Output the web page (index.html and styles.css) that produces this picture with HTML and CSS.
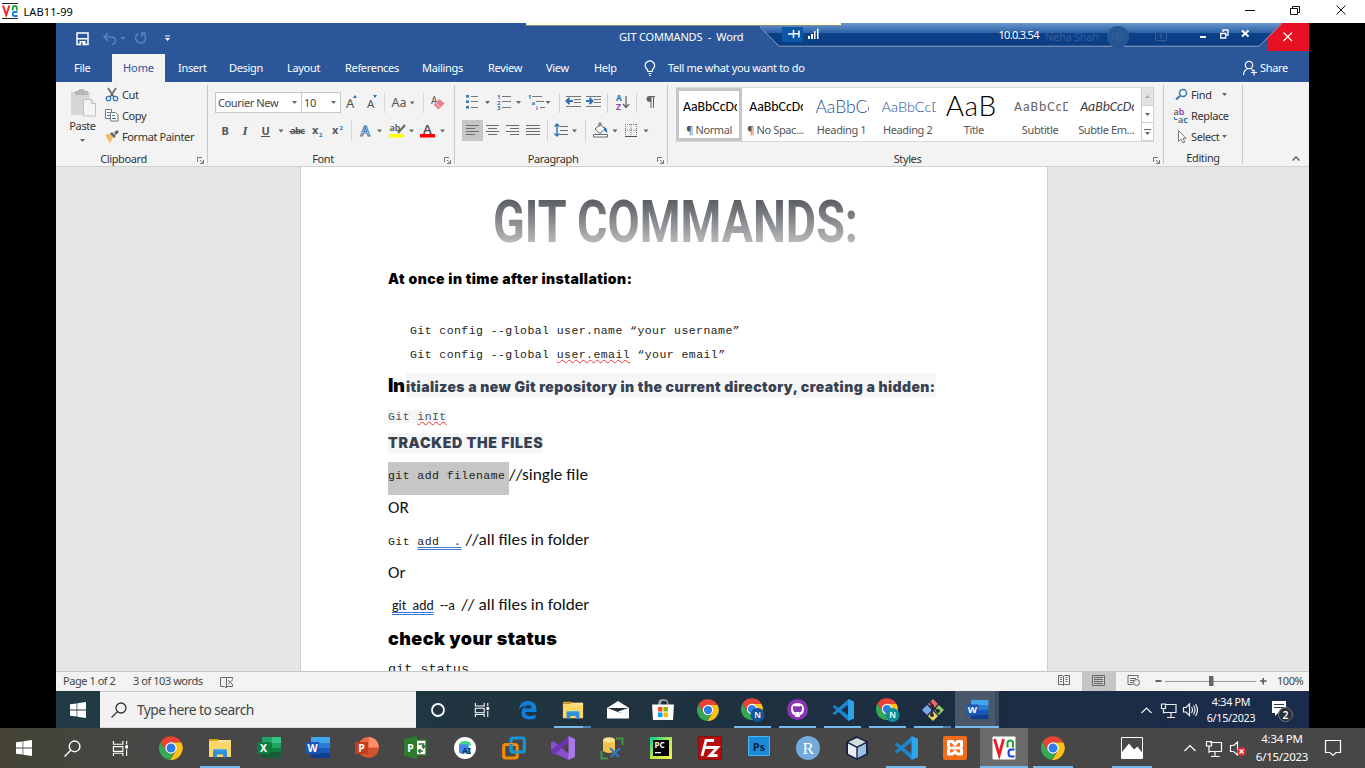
FILE: index.html
```html
<!DOCTYPE html>
<html lang="en">
<head>
<meta charset="utf-8">
<title>LAB11-99</title>
<link rel="stylesheet" href="styles.css">
</head>
<body>
<svg class="defs" width="0" height="0">
  <defs>
    <linearGradient id="steel" x1="0" y1="0" x2="0" y2="1">
      <stop offset="0.15" stop-color="#54585d"/><stop offset="0.45" stop-color="#7f8387"/><stop offset="0.85" stop-color="#bfbfc1"/>
    </linearGradient>
    <linearGradient id="barTop" x1="0" y1="0" x2="0" y2="1">
      <stop offset="0" stop-color="#6a96cc"/><stop offset="0.42" stop-color="#2c62a8"/><stop offset="0.46" stop-color="#0b4087"/><stop offset="1" stop-color="#0a3d84"/>
    </linearGradient>
    <linearGradient id="pyc" x1="0" y1="0" x2="1" y2="1">
      <stop offset="0.1" stop-color="#21d789"/><stop offset="0.5" stop-color="#b7e84f"/><stop offset="1" stop-color="#fcf84a"/>
    </linearGradient>
  </defs>
  <symbol id="chrome" viewBox="0 0 24 24">
    <path fill="#ea4335" d="M1.6 6A12 12 0 0 1 22.4 6.5H12L7 15Z"/>
    <path fill="#fbc116" d="M22.4 6.5A12 12 0 0 1 11 24L17 14.8 12 6.5Z"/>
    <path fill="#34a853" d="M1.6 6L7 15A6 6 0 0 0 15 17L11 24A12 12 0 0 1 1.6 6Z"/>
    <circle cx="12" cy="12" r="5.7" fill="#fff"/><circle cx="12" cy="12" r="4.5" fill="#2f7de9"/>
  </symbol>
  <symbol id="explorer" viewBox="0 0 24 24">
    <path fill="#e2a10c" d="M1 3h9l1.500 2H1z"/><path fill="#f9d667" d="M1 5h22V21H1z"/><path fill="#fbe08c" d="M10 4h13v3H10z"/>
    <path fill="#2f8fd8" d="M5 21v-6.500l1.500-1.500h11l1.500 1.500V21.500h-4v-3H9v3H5z"/><path fill="#4bb0f0" d="M5 14.500l1.500-1.500h11l1.500 1.500z"/>
  </symbol>
  <symbol id="word" viewBox="0 0 24 24">
    <path fill="#41a5ee" d="M5 1h19v6H5z"/><path fill="#2b7cd3" d="M5 7h19v5H5z"/><path fill="#185abd" d="M5 12h19v5H5z"/><path fill="#103f91" d="M5 17h19v5H5z"/>
    <path fill="#1a56b4" d="M0 6h13v12H0z"/><text class="badge-letter" x="6.500" y="15.800">W</text>
  </symbol>
  <symbol id="vscode" viewBox="0 0 24 24">
    <path fill="#1d86cc" d="M.5 8.200L2.800 6.500 18 18v6z"/><path fill="#1d86cc" d="M.5 15.800L2.800 17.500 18 6V0z"/>
    <path fill="#2ba4ec" d="M17.500 0L24 2.800V21.200L17.500 24z"/>
  </symbol>
  <symbol id="winlogo" viewBox="0 0 16 16">
    <path fill="#fff" d="M0 2.300L6.600 1.400V7.600H0zM7.300 1.300L16 0V7.600H7.300zM0 8.400H6.600V14.600L0 13.700zM7.300 8.400H16V16L7.300 14.700z"/>
  </symbol>
  <symbol id="lens" viewBox="0 0 16 16">
    <circle cx="10" cy="6" r="5" fill="none" stroke="currentColor" stroke-width="1.300"/><path d="M6.400 9.600L.5 15.500" stroke="currentColor" stroke-width="1.300"/>
  </symbol>
  <symbol id="taskview" viewBox="0 0 18 18">
    <path fill="none" stroke="currentColor" stroke-width="1.200" d="M1.500 1v3.500h10V1M1.500 7h10v5h-10zM1.500 17v-3h10v3M15.500 1v3.500M15.500 10v7"/><path fill="currentColor" d="M14 5.500h3V9h-3z"/>
  </symbol>
  <symbol id="launcher" viewBox="0 0 7 7"><path fill="none" stroke="#777" d="M.5 5V.5H5M3 3l3 3M6.500 3v3.500H3"/></symbol>
  <symbol id="drop" viewBox="0 0 5 3"><path fill="#666" d="M0 0h5L2.500 3z"/></symbol>
</svg>

<header class="viewer-bar">
  <svg class="viewer-logo" width="17" height="17" viewBox="2 3 17 17"><path stroke="#222" d="M2 3.500h16M2 18.500h16"/><path fill="none" stroke="#f02a2a" stroke-width="2" d="M3 5.500l3.200 9.500 3.200-9.500"/><path fill="none" stroke="#1aa33a" stroke-width="1.800" d="M12.800 10.500v-2.500q0-2 2-2t2 2v2.500"/><path fill="none" stroke="#2277ee" stroke-width="1.800" d="M17.500 12h-3q-1.800 0-1.800 2t1.800 2h3"/></svg>
  <span class="viewer-title">LAB11-99</span>
  <svg class="viewer-controls" width="110" height="23" viewBox="1240 0 110 23"><path fill="none" stroke="#111" d="M1245 10.500h10M1290.500 8.500h7v6h-7zM1292.500 8.500v-2h7v6h-2M1336.500 5.500l9 9M1345.500 5.500l-9 9"/></svg>
</header>

<main class="stage">
 <div class="remote">
  <div class="titlebar">
    <svg class="quick" width="120" height="31" viewBox="66 23 120 31"><path fill="none" stroke="#fff" stroke-width="1.500" d="M77 33h11v11.500H77z"/><path fill="#fff" d="M77 38h11v1.500H77zM79.500 41h6v4h-6z"/><path fill="#2b579a" d="M81 42.500h1.500V45H81z"/>
      <g fill="none" stroke="#5d83bf" stroke-width="1.500"><path d="M108 33l-4 4 4 4M104.500 37h7q4 0 4 3.500 0 3-3.500 4"/><path d="M138.500 33.500a5 5 0 1 0 5 .5M146 33h-4v4"/></g><path fill="#5d83bf" d="M120.500 37h5l-2.500 3z"/><path fill="#fff" d="M165 35.500h5v1h-5zM165 38h5l-2.500 3z"/></svg>
    <span class="doc-name">GIT COMMANDS&nbsp; -&nbsp; Word</span>
    <span class="close-word"></span>
    <span class="tip-strip"></span>
    <svg class="rdp-bar" width="549" height="28" viewBox="760 23 549 28">
      <path fill="url(#barTop)" d="M757 23H1282L1259 46H779z"/><path fill="#2b579a" d="M757 23h3l0 3z"/><path fill="none" stroke="#8d9dbb" d="M760 27l19 19.200h480L1282 23.500"/>
      <path fill="#0d57a8" d="M782 27h21v15h-21z"/><path fill="none" stroke="#fff" stroke-width="1.500" d="M788 34h5M793.500 30v8M794 33.800h5M799 30.500v7"/><path fill="#fff" d="M808 36h2v3h-2zM811 34h2v5h-2zM814 31h1.500v8H814zM817 28.500h1.500V39H817z"/>
      <text class="dim" x="1045" y="41">Neha Shah</text><circle cx="1118" cy="37" r="11" fill="#245792"/><text class="dim" x="1111" y="41">NS</text><path fill="none" stroke="#345f9d" d="M1155.500 32.500h11v8h-11zM1161 39v-5M1158.500 36l2.500-2 2.500 2"/>
      <text class="addr" x="998.500" y="38.500">10.0.3.54</text>
      <path fill="#fff" d="M1200 36h6v2h-6z"/><path fill="none" stroke="#fff" stroke-width="1.300" d="M1220.700 33.500h5v4.500h-5zM1223 32v-2h5v5h-1.500"/><path stroke="#fff" stroke-width="2" d="M1242 30.500l6.500 6M1248.500 30.500l-6.500 6"/>
      <path stroke="#fff" stroke-width="1.200" d="M1283.500 32.500l8.500 8.500M1292 32.500l-8.500 8.500"/>
    </svg>
  </div>

  <nav class="tabs">
    <span class="tab file">File</span><span class="tab active">Home</span><span class="tab insert">Insert</span><span class="tab design">Design</span><span class="tab layout">Layout</span><span class="tab refs">References</span><span class="tab mail">Mailings</span><span class="tab review">Review</span><span class="tab view">View</span><span class="tab help">Help</span>
    <svg width="24" height="28" viewBox="644 54 24 28"><path fill="none" stroke="#fff" stroke-width="1.200" d="M648 71.500q0-1.500-2-3.500a4.600 4.600 0 1 1 7.800 0q-1.800 2-1.800 3.500zM648.500 73.500h3M649 75.500h2"/></svg>
    <span class="tell">Tell me what you want to do</span>
    <svg width="18" height="28" viewBox="1242 54 18 28"><g fill="none" stroke="#fff" stroke-width="1.200"><circle cx="1249" cy="65" r="3.700"/><path d="M1243.500 75q.5-5 4-6.200M1251 68.500l2 2.500M1254 69.500v6M1251 72.500h6"/></g></svg>
    <span>Share</span>
  </nav>

  <section class="ribbon">
    <div class="group clipboard">
      <div class="group-body clip-body">
        <div class="paste"><svg width="28" height="31" viewBox="70 88 28 31"><path fill="#d8d5d8" d="M72 92h19v23H72z"/><path fill="#bbb6ba" d="M76 91h3q0-2 3.500-2t3.500 2h3v4H76z"/><path fill="#f5f3f5" stroke="#c4bfc4" d="M84.500 99.500h8l4 4V116h-12zM92.500 99.500v4h4"/></svg><span>Paste</span><svg class="dd" width="5" height="3"><use href="#drop"/></svg></div>
        <div class="clip-list">
          <div><svg width="16" height="16" viewBox="104 87 16 16"><path fill="none" stroke="#666" stroke-width="1.600" d="M108 88l6 9M116 88l-6 9"/><g fill="none" stroke="#3b79b7" stroke-width="1.300"><circle cx="108.500" cy="98.500" r="2.200"/><circle cx="115.500" cy="98.500" r="2.200"/></g></svg>Cut</div>
          <div><svg width="16" height="16" viewBox="104 108 16 16"><path fill="#fff" stroke="#777" d="M105.500 109.500h6v9h-6z"/><path fill="#fff" stroke="#777" d="M110.500 112.500h5l2.500 2.500v6h-7.500z"/><path stroke="#3b79b7" d="M107 112.500h3M107 115.500h3M112 115.500h3M112 118.500h4"/></svg>Copy</div>
          <div><svg width="16" height="16" viewBox="104 129 16 16"><path fill="#f3bd6c" d="M105 135l4-1.500 4 4-3 6q-2-4-5-8.500z"/><path fill="#666" d="M110 134l2-2 4 4-2 2zM114 132.500l3-2.500 2 2-3 3z"/></svg>Format Painter</div>
        </div>
      </div>
      <div class="group-foot"><span>Clipboard</span><svg width="7" height="7"><use href="#launcher"/></svg></div>
    </div>

    <div class="group font">
      <div class="group-body font-body">
        <div class="font-row"><span class="combo name">Courier New<svg width="5" height="3"><use href="#drop"/></svg></span><span class="combo size">10<svg width="5" height="3"><use href="#drop"/></svg></span>
          <svg width="106" height="22" viewBox="342 91 106 22"><g class="glyph"><text x="346" y="107" font-size="13">A</text><text x="367" y="107" font-size="11.500">A</text><text x="391.500" y="106" font-size="12.500">Aa</text><text x="431" y="103" font-size="10">A</text></g><path fill="#2a72b5" d="M353 97h4l-2-3zM373 94h4l-2 3z"/><path fill="#666" d="M410 100.500h4.500l-2.300 3z"/><path stroke="#d5d5d5" d="M384.500 92v20M423.500 92v20"/><path fill="#e8818d" d="M433.500 103.500l6-5.500 5 4.500-6 6z"/><path stroke="#f7c0c6" d="M435.500 101.500l5 5"/></svg></div>
        <svg width="234" height="22" viewBox="214 120 234 22"><g class="glyph heavy"><text x="220.500" y="134.500">B</text><text x="241.500" y="134.500" class="ital">I</text><text x="260.500" y="134.500">U</text><text x="289" y="134" font-size="9.500" textLength="15">abc</text><text x="311" y="134">x</text><text x="331" y="134">x</text></g><path stroke="#555" d="M260 136.500h9M288.500 131.500h15.500"/><text class="tiny" x="318" y="137">2</text><text class="tiny" x="338.500" y="130">2</text>
          <path stroke="#d5d5d5" d="M350.500 120v21"/><text x="359.500" y="135.500" class="effect">A</text><text class="glyph marker" x="388.500" y="131">ab</text><path stroke="#666" stroke-width="2" d="M397 133l7-8"/><path fill="#ff0" d="M388 134h15v3.500h-15z"/><text class="glyph fontcolor" x="422" y="133.500">A</text><path fill="#f00" d="M419 134h15v3.500h-15z"/><path fill="#666" d="M277.500 129.500h5l-2.500 3zM376 129.500h5l-2.500 3zM408 129.500h5l-2.500 3zM439 129.500h5l-2.500 3z"/></svg>
      </div>
      <div class="group-foot"><span>Font</span><svg width="7" height="7"><use href="#launcher"/></svg></div>
    </div>

    <div class="group paragraph">
      <div class="group-body para-body">
        <svg width="204" height="54" viewBox="460 90 204 54">
          <g fill="#3676b5"><path d="M466 95h3v2.500h-3zM466 100.500h3v2.500h-3zM466 106h3v2.500h-3z"/></g>
          <path stroke="#777" d="M471 96.500h7M471 101.500h7M471 107.500h7M502 96.500h9M502 101.500h9M502 107.500h9M532 96.500h10M536 101.500h8M540 107.500h5"/>
          <g class="tiny"><text x="497" y="99">1</text><text x="497" y="104.500">2</text><text x="497" y="110">3</text><text x="528" y="99">1</text><text x="531.500" y="104.500">a</text><text x="536" y="109.500">i</text></g>
          <path fill="#666" d="M485 101h5l-2.500 3zM516 101h5l-2.500 3zM545.500 101h5l-2.500 3zM572 129.500h5l-2.500 3zM612.500 129.500h5l-2.500 3zM643.500 129.500h5l-2.500 3z"/>
          <path stroke="#d0d0d0" d="M559.500 93v20M607.500 93v20M636.500 93v20M547.500 120v21M585.500 120v21"/>
          <path stroke="#777" d="M566 96.500h15M574 99.500h7M574 102.500h7M566 106.500h15M586 96.500h15M594 99.500h7M594 102.500h7M586 106.500h15"/><path fill="none" stroke="#2a72b5" stroke-width="2" d="M567 101h6M569.500 98l-3 3 3 3M586 101h6M589.500 98l3 3-3 3"/>
          <text x="616" y="101" class="sort-a">A</text><text x="616" y="109.500" class="sort-z">Z</text><path fill="none" stroke="#666" stroke-width="1.300" d="M626 96v11M623 104l3 3.500 3-3.500"/>
          <path fill="#666" d="M649 96h6v1.200h-1V108h-1V97.200h-1.500V108h-1v-6q-4 0-4-3 0-3 3-3z"/>
          <path fill="#c6c6c6" d="M462 120h21v21h-21z"/>
          <path stroke="#6d6d6d" d="M466 125.500h13M466 128.500h9M466 131.500h13M466 134.500h9M486 125.500h13M488 128.500h9M486 131.500h13M488 134.500h9M506 125.500h13M510 128.500h9M506 131.500h13M510 134.500h9M526 125.500h14M526 128.500h14M526 131.500h14M526 134.500h14M560 126.500h8M560 130.500h8M560 134.500h8"/>
          <path fill="none" stroke="#2a72b5" stroke-width="1.400" d="M557 124v12M554.500 126.500l2.500-2.500 2.500 2.500M554.500 133.500l2.500 2.500 2.500-2.500"/>
          <path fill="#fff" stroke="#666" d="M595 129l5-4.500 5 4.500-5 4.500zM599 127v-4h2v3M593.500 134.500h14v2.500h-14z"/><path fill="#2a72b5" d="M604 127q4 1 3 6l-3-3z"/>
          <path fill="none" stroke="#777" stroke-dasharray="1 1" d="M625 124.500h12M625.500 124v12M636.500 124v12M631 124v12M625 130h12"/><path stroke="#555" d="M625 136.500h12"/>
        </svg>
      </div>
      <div class="group-foot"><span>Paragraph</span><svg width="7" height="7"><use href="#launcher"/></svg></div>
    </div>

    <div class="group styles">
      <div class="group-body gallery-body">
        <div class="gallery">
          <div class="tile selected"><span class="sample">AaBbCcDc</span><span class="name">¶ Normal</span></div>
          <div class="tile"><span class="sample">AaBbCcDc</span><span class="name">¶ No Spac...</span></div>
          <div class="tile"><span class="sample h1">AaBbCc</span><span class="name">Heading 1</span></div>
          <div class="tile"><span class="sample h2">AaBbCcD</span><span class="name">Heading 2</span></div>
          <div class="tile"><span class="sample title">AaB</span><span class="name">Title</span></div>
          <div class="tile"><span class="sample subtitle">AaBbCcD</span><span class="name">Subtitle</span></div>
          <div class="tile"><span class="sample subtle">AaBbCcDc</span><span class="name">Subtle Em...</span></div>
          <div class="scroller"><span class="off"><svg width="5" height="3" viewBox="0 0 5 3"><path fill="#aaa" d="M0 3h5L2.500 0z"/></svg></span><span><svg width="5" height="3"><use href="#drop"/></svg></span><span><svg width="7" height="6" viewBox="0 0 7 6"><path fill="#666" d="M0 0h7v1H0zM1 3h5L3.500 6z"/></svg></span></div>
        </div>
      </div>
      <div class="group-foot"><span>Styles</span><svg width="7" height="7"><use href="#launcher"/></svg></div>
    </div>

    <div class="group editing">
      <div class="group-body edit-list">
        <div><svg width="17" height="16" viewBox="1173 87 17 16"><circle cx="1183" cy="93" r="3.500" fill="#fff" stroke="#3676b5" stroke-width="1.500"/><path stroke="#3676b5" stroke-width="2" d="M1180 96l-4 3.500"/></svg>Find<svg class="gap" width="5" height="3"><use href="#drop"/></svg></div>
        <div><svg width="17" height="16" viewBox="1173 108 17 16"><text class="rep" x="1173.500" y="115">a<tspan fill="#8a3fb0">b</tspan></text><text class="rep" x="1178" y="123">a<tspan fill="#2a72b5">c</tspan></text><path fill="none" stroke="#2a72b5" d="M1174.500 117v2.500h3"/></svg>Replace</div>
        <div><svg width="17" height="16" viewBox="1173 129 17 16"><path fill="#fff" stroke="#777" d="M1178.500 130.500v11l2.500-2.500 2 4 1.800-1-1.800-3.700h3z"/></svg>Select<svg class="near" width="5" height="3"><use href="#drop"/></svg></div>
      </div>
      <div class="group-foot solo"><span>Editing</span></div>
    </div>
    <div class="collapse"><svg width="8" height="5" viewBox="0 0 8 5"><path fill="none" stroke="#666" stroke-width="1.500" d="M.5 4.500L4 1l3.500 3.500"/></svg></div>
  </section>

  <section class="workspace">
    <article class="page">
      <h1 class="wordart"><svg width="380" height="94" viewBox="486 167 380 94"><text x="493" y="241.500" textLength="365" lengthAdjust="spacingAndGlyphs">GIT COMMANDS:</text></svg></h1>
      <p class="black-text first">At once in time after installation:</p>
      <p class="code indent gap-top">Git config --global user.name “your username”</p>
      <p class="code indent">Git config --global <span class="squiggle">user.email</span> “your email”</p>
      <p class="black-text init"><span class="big">In</span><span class="shade">itializes a new Git repository in the current directory, creating a hidden:</span></p>
      <p class="code gitinit"><span class="shade">Git <span class="squiggle">inIt</span></span></p>
      <p class="black-text tracked"><span class="shade">TRACKED THE FILES</span></p>
      <p class="body-line select-line"><span class="selection code-run">git add filename</span>//single file</p>
      <p class="body-line">OR</p>
      <p class="body-line"><span class="code-run">Git <span class="double">add&nbsp; .</span></span><span class="after-dot">//all files in folder</span></p>
      <p class="body-line">Or</p>
      <p class="body-line"><span class="small-run"><span class="double">git&nbsp; add</span>&nbsp; --a&nbsp; </span>// all files in folder</p>
      <p class="black-text check">check your status</p>
      <p class="code status-code">git status</p>
    </article>
  </section>

  <footer class="statusbar">
    <span class="pages">Page 1 of 2</span><span class="words">3 of 103 words</span>
    <svg width="14" height="12" viewBox="220 674 14 12"><path fill="none" stroke="#666" d="M226.500 675.500h-6v9h4l2 1.500zM226.500 675.500h6v2M226.500 684.500h6v-2M228 678l4.500 4.500M232.500 678l-4.500 4.500"/></svg>
    <svg class="views" width="218" height="19" viewBox="1057 672 218 19"><path fill="#c6c6c6" d="M1082 672h34v19h-34z"/><path fill="none" stroke="#666" d="M1058.500 675.500h4l1 1 1-1h5v9h-5l-1 1-1-1h-4zM1063.500 676v9M1060 677.500h2M1060 679.500h2M1060 681.500h2M1065.500 677.500h2M1065.500 679.500h2M1065.500 681.500h2M1092.500 675.500h12v10h-12zM1094 677.500h9M1094 679.500h9M1094 681.500h9M1094 683.500h9M1133 684.500h-5v-9h10v3M1130 678.500h6M1130 680.500h4M1130 682.500h3"/><circle cx="1136.500" cy="682.500" r="3" fill="#eee" stroke="#666"/><path stroke="#555" stroke-width="1.800" d="M1155.500 681h6"/><path stroke="#999" d="M1165 681.500h91"/><path fill="#666" d="M1209 676h4.500v10h-4.500z"/><path stroke="#555" stroke-width="1.500" d="M1260 681h6.500M1263.200 678v6.500"/></svg>
    <span class="zoom">100%</span>
  </footer>

  <nav class="inner-taskbar">
    <span class="start"><svg width="16" height="16"><use href="#winlogo"/></svg></span>
    <span class="search"><svg width="16" height="16"><use href="#lens"/></svg>Type here to search</span>
    <span class="sys"><svg width="14" height="14" viewBox="0 0 14 14"><circle cx="7" cy="7" r="6" fill="none" stroke="#fff" stroke-width="1.800"/></svg></span>
    <span class="sys"><svg width="16" height="16"><use href="#taskview"/></svg></span>
    <span class="app"><svg width="20" height="20" viewBox="0 0 20 20"><path fill="#0f7fdc" d="M1 9Q2 1 10 1q8.500 0 8.500 9v2H7q.5 4 5 4 3 0 5.500-1.500V18Q15 19.500 11.500 19.500 3.500 19.500 3.500 13 3.500 8.500 8 6 3.500 6 1 9zM7 8.500h6.500Q13.500 5 10.300 5 7.500 5 7 8.500z"/></svg></span>
    <span class="app open multi"><svg width="22" height="22"><use href="#explorer"/></svg></span>
    <span class="app"><svg width="24" height="20" viewBox="0 0 24 20"><path fill="#fff" d="M1 8L12 1l11 7v10.500H1z"/><path fill="#20303e" d="M1.500 8h21L12 11.500 17 14z"/></svg></span>
    <span class="app"><svg width="22" height="22" viewBox="0 0 22 22"><path fill="none" stroke="#aaa" stroke-width="1.300" d="M7 6V3.500Q7 1 10 1M8 6Q8 1 12 1t4 5"/><path fill="#fff" d="M0 5.500h22L21 21H1z"/><path fill="#f25022" d="M6 8h4.500v4.500H6z"/><path fill="#7fba00" d="M11.500 8H16v4.500h-4.500z"/><path fill="#00a4ef" d="M6 13.500h4.500V18H6z"/><path fill="#ffb900" d="M11.500 13.500H16V18h-4.500z"/></svg></span>
    <span class="app"><svg width="22" height="22"><use href="#chrome"/></svg></span>
    <span class="app open"><svg width="24" height="24" viewBox="0 0 24 24"><use href="#chrome" width="22" height="22"/><circle cx="16.500" cy="17" r="7" fill="#115596"/><text class="n" x="16.500" y="20">N</text></svg></span>
    <span class="app open"><svg width="21" height="21" viewBox="0 0 21 21"><circle cx="10.500" cy="10.500" r="10.500" fill="#8a35b4"/><path fill="#fff" d="M4 10Q4 4 10.500 4T17 10q0 5-4.500 6.500V18h-4v-1.500Q4 15 4 10z"/><path fill="#8a35b4" d="M8.500 16v-2.500Q6 13 6 9.500L6.500 6.500l2.300 1q1.700-.4 3.400 0l2.300-1 .5 3q0 3.500-2.500 4V16z"/><path fill="#fff" d="M8.500 13h4v5h-4zM4.500 13.500l4 2.500v1.300z"/></svg></span>
    <span class="app open"><svg width="22" height="22"><use href="#vscode"/></svg></span>
    <span class="app open"><svg width="24" height="24" viewBox="0 0 24 24"><use href="#chrome" width="22" height="22"/><circle cx="16.500" cy="17" r="7" fill="#128c96"/><text class="n" x="16.500" y="20">N</text></svg></span>
    <span class="app open multi"><svg width="22" height="22" viewBox="0 0 22 22"><path fill="#ee6a6a" d="M11 0l5 5-5 5-5-5z"/><path fill="#7aa7ee" d="M5 6l5 5-5 5-5-5z"/><path fill="#8dd06a" d="M17 6l5 5-5 5-5-5z"/><path fill="#f3d668" d="M11 12l5 5-5 5-5-5z"/><path fill="none" stroke="#2b2b33" stroke-width="1.700" d="M7.500 2.500l2.500 3v12M10 8l6 4"/><g fill="#2b2b33"><circle cx="10" cy="7" r="2"/><circle cx="16" cy="12" r="2"/><circle cx="10" cy="16" r="2"/></g></svg></span>
    <span class="app open current"><svg width="23" height="22"><use href="#word"/></svg></span>
    <span class="inner-tray"><svg width="60" height="22" viewBox="1138 699 60 22"><g fill="none" stroke="#eee" stroke-width="1.200"><path d="M1141.500 713l5-5 5 5M1166 704.500h10v8h-12M1171 713v4M1167 717.500h8M1161.500 704h4v4.500h-4zM1163.500 708.500v5M1183.500 707.500h2.500l3.500-3.500v11.500l-3.500-3.500h-2.500zM1191.500 707q2 3 0 6M1193.500 705.500q3 4.500 0 9M1195.500 704q4 6 0 12"/></g></svg>
      <span class="clock">4:34 PM<br>6/15/2023</span>
      <svg width="24" height="26" viewBox="1270 698 24 26"><path fill="#fff" d="M1272 702h14v12h-8l-3 3v-3h-3z"/><path stroke="#26344e" d="M1274 705.500h10M1274 708.500h10"/><circle cx="1285.500" cy="715.500" r="7" fill="#2a2e38" stroke="#777"/><text class="n two" x="1285.500" y="719.500">2</text></svg></span>
  </nav>
 </div>
</main>

<nav class="taskbar">
  <span class="sys"><svg width="16" height="16"><use href="#winlogo"/></svg></span>
  <span class="sys"><svg width="17" height="17"><use href="#lens"/></svg></span>
  <span class="sys"><svg width="17" height="17"><use href="#taskview"/></svg></span>
  <span class="app"><svg width="24" height="24"><use href="#chrome"/></svg></span>
  <span class="app open"><svg width="24" height="24"><use href="#explorer"/></svg></span>
  <span class="app"><svg width="24" height="24" viewBox="0 0 24 24"><path fill="#21a366" d="M5 1h11v6H5z"/><path fill="#33c481" d="M15 1h9v6h-9z"/><path fill="#107c41" d="M5 7h10v9H5z"/><path fill="#21a366" d="M15 7h9v5h-9z"/><path fill="#107c41" d="M15 12h9v5h-9z"/><path fill="#185c37" d="M5 16h19v6H5z"/><path fill="#107c41" d="M0 6h13v12H0z"/><text class="badge-letter" x="6.500" y="15.800">X</text></svg></span>
  <span class="app"><svg width="24" height="24"><use href="#word"/></svg></span>
  <span class="app"><svg width="24" height="24" viewBox="0 0 24 24"><circle cx="13.500" cy="11.500" r="10.500" fill="#d35230"/><path fill="#ff8f6b" d="M13.500 1A10.500 10.500 0 0 1 24 11.500H13.500z"/><path fill="#ed6c47" d="M13.500 1v10.500H3A10.500 10.500 0 0 1 13.500 1z"/><path fill="#c43e1c" d="M0 6h13v12H0z"/><text class="badge-letter" x="6.500" y="15.800">P</text></svg></span>
  <span class="app"><svg width="24" height="24" viewBox="0 0 24 24"><path fill="#fff" stroke="#31752f" stroke-width="1.500" d="M12 4h10v15H12z"/><path fill="none" stroke="#31752f" stroke-width="1.500" d="M14.500 8h5v4M18 9.500l1.500 2.500 1.500-2.500M19 15h-4M16.500 13l-2 2 2 2"/><path fill="#2f7b31" d="M0 3l13-3v23L0 20z"/><text class="badge-letter" x="6.500" y="15.800">P</text></svg></span>
  <span class="app"><svg width="24" height="24" viewBox="0 0 24 24"><circle cx="12" cy="12" r="11" fill="#fff"/><path fill="#3ddc84" d="M6 10q0-5 6-5t6 4l-6 2z"/><path fill="#4285f4" d="M6 8.500h9l3 9H8q-2 0-2-2z"/><text x="9" y="18" class="ai">AI</text></svg></span>
  <span class="app"><svg width="24" height="24" viewBox="0 0 24 24"><g fill="none" stroke-width="3.200"><rect x="9" y="2" width="13.300" height="14" rx="2" stroke="#1896d4"/><rect x="1.700" y="8.500" width="13.500" height="13.500" rx="2" stroke="#f38b00"/><path stroke="#1896d4" d="M9 8v6q0 2 2 2h6"/></g></svg></span>
  <span class="app"><svg width="24" height="24" viewBox="0 0 24 24"><path fill="#8a4fd0" d="M0 6.500L2.500 5 18 18v6L2.500 17V10l0 7L0 17.500z"/><path fill="#6b35b0" d="M0 17.500L2.500 19 18 6V0L0 14z"/><path fill="#a679e6" d="M17.500 0L24 3v18l-6.500 3z"/></svg></span>
  <span class="app"><svg width="24" height="24" viewBox="0 0 24 24"><path fill="none" stroke="#43994a" stroke-width="2" d="M16 2.500h6.500V9M1.500 15v7.500H8"/><path fill="#f3c24c" d="M3 4v11q6 4 12 0V4z"/><ellipse cx="9" cy="4" rx="6" ry="2.800" fill="#fbe396"/><path stroke="#2b7cc9" stroke-width="2.200" d="M10 12l9 9M20 12l-9 9"/></svg></span>
  <span class="app"><svg width="24" height="24" viewBox="0 0 24 24"><path fill="url(#pyc)" d="M1 1h22v22H1z"/><path fill="#000" d="M4 4h16v16H4z"/><text x="5.500" y="12" class="pc">PC</text><path fill="#fff" d="M6 16h6v1.300H6z"/></svg></span>
  <span class="app"><svg width="24" height="24" viewBox="0 0 24 24"><path fill="#b60d0d" stroke="#7a0000" stroke-dasharray="1 1" d="M.5.500h23v23H.5z"/><path fill="none" stroke="#fff" stroke-width="2.800" d="M4 20L8 4.500h8M6.500 11.500h7.500M12 11.500h7.500L12 19.500h7.500"/></svg></span>
  <span class="app"><svg width="24" height="24" viewBox="0 0 24 24"><path fill="#1b8bd8" stroke="#4bb4f4" d="M1.500 .5h21v19h-21z"/><text x="12" y="14.500" class="ps">Ps</text></svg></span>
  <span class="app"><svg width="24" height="24" viewBox="0 0 24 24"><circle cx="12" cy="12" r="12" fill="#75aadb"/><text x="12" y="17.500" class="rr">R</text></svg></span>
  <span class="app"><svg width="24" height="24" viewBox="0 0 24 24"><path fill="#1b2347" d="M12 0l11 5.500v13L12 24 1 18.500v-13z"/><path fill="#cfe0dc" d="M12 2l8.500 4L12 10.500 3.500 6z"/><path fill="#e8eff8" d="M3 7.500l8.300 4.300V22L3 17.700z"/><path fill="#9dc0e6" d="M21 7.500l-8.300 4.300V22l8.300-4.300z"/></svg></span>
  <span class="app open"><svg width="24" height="24"><use href="#vscode"/></svg></span>
  <span class="app"><svg width="24" height="24" viewBox="0 0 24 24"><rect width="24" height="24" rx="2" fill="#ef6c1a"/><path fill="none" stroke="#fff" stroke-width="3" stroke-linejoin="round" d="M5.500 5.500h4l2.500 3 2.500-3h4v5l-1.500 1.500 1.500 1.500v4.500h-4L12 15.500 9.500 18h-4v-4.500L7 12l-1.500-1.500zM8.500 12h7"/></svg></span>
  <span class="app open current"><svg width="24" height="24" viewBox="0 0 24 24"><rect x=".5" y=".5" width="23" height="23" fill="#fff" rx="1"/><path fill="none" stroke="#ed1c24" stroke-width="2.800" d="M2.500 3l4.700 16 4.300-16"/><path fill="none" stroke="#1ba23a" stroke-width="2" d="M15.500 11.500V7q0-2.500 2.700-2.500T21 7v4.500"/><path fill="none" stroke="#1740e0" stroke-width="2" d="M22.500 13.500H19q-2.500 0-2.500 3.500t2.500 3.500h3.500"/></svg></span>
  <span class="app open"><svg width="24" height="24"><use href="#chrome"/></svg></span>
  <span class="app open photos"><svg width="22" height="22" viewBox="0 0 22 22"><path fill="#484848" stroke="#fff" d="M.5.500h21v21H.5z"/><path fill="#fff" d="M1 15l7-8.500 5 6 3.500-3 4.500 6V21H1z"/></svg></span>
  <span class="tray"><svg width="66" height="24" viewBox="1182 736 66 24"><g fill="none" stroke="#fff" stroke-width="1.200"><path d="M1183.500 751l5.500-5.500 5.500 5.500M1209 742.500h11.500v9H1208M1214 752v4.500M1210 756.500h8.500M1205.500 741.500h5v4.500h-5zM1208 746v7M1229.500 745.500h3l4-3.500v13l-4-3.500h-3z"/></g><circle cx="1240.500" cy="751.500" r="4.500" fill="#e02b32"/><path stroke="#fff" stroke-width="1.300" d="M1238.500 749.500l4 4M1242.500 749.500l-4 4"/></svg>
    <span class="clock">4:34 PM<br>6/15/2023</span>
    <svg width="18" height="18" viewBox="1324 739 18 18"><path fill="none" stroke="#fff" stroke-width="1.200" d="M1325.500 740.500h15v12h-4.500l-3 3-3-3h-4.500z"/></svg></span>
</nav>
</body>
</html>
```
FILE: styles.css
```css
* { box-sizing: border-box; }
body { margin: 0; width: 1365px; height: 768px; overflow: hidden; display: flex; flex-direction: column; font-family: "Noto Sans", "Open Sans", sans-serif; font-size: 11px; letter-spacing: -0.38px; color: #333; background: #000; }
svg { flex: none; display: block; }
.defs { position: absolute; }
p, h1 { margin: 0; white-space: pre; }
span { white-space: nowrap; }

.viewer-bar { height: 23px; background: #fff; display: flex; align-items: center; padding: 0 15px 0 2px; flex: none; }
.viewer-logo { margin-right: 4.5px; }
.viewer-title { color: #000; letter-spacing: .1px; font-size: 11px; }
.viewer-controls { margin-left: auto; }

.stage { height: 705px; padding-left: 56px; background: #000; flex: none; }
.remote { width: 1253px; height: 705px; display: flex; flex-direction: column; overflow: hidden; }
.remote > * { flex: none; }

.titlebar { height: 31px; background: #2b579a; position: relative; color: #fff; display: flex; }
.quick { margin-left: 10px; }
.doc-name { margin-left: 433px; line-height: 28px; letter-spacing: -.18px; }
.close-word { position: absolute; right: 0; top: 0; width: 42px; height: 28px; background: #e81123; }
.rdp-bar { position: absolute; right: 0; top: 0; }
.tip-strip { position: absolute; left: 470px; top: 0; width: 315px; height: 3px; background: #ffffe1; border-bottom: 1px solid #8d8d84; z-index: 2; }
.dim { font-size: 11px; fill: #345f9d; letter-spacing: -.3px; }
.addr { font-size: 11px; fill: #fff; letter-spacing: -.7px; }

.tabs { height: 28px; background: #2b579a; color: #fff; display: flex; align-items: center; padding-left: 18px; line-height: 28px; letter-spacing: -.32px; }
.tab { width: 60px; }
.tabs .file { width: 38px; }
.tabs .active { width: 53px; background: #f3f3f3; color: #2b579a; text-align: center; letter-spacing: -.1px; }
.insert { padding-left: 13px; width: 64px !important; }
.design { width: 58px; }
.layout { width: 58px; }
.refs { width: 77px; }
.mail { width: 66px; }
.review { width: 58px; }
.view { width: 48px; }
.help { width: 50px; }
.tell { width: 574px; }

.ribbon { height: 85px; background: #f3f3f3; border-bottom: 1px solid #d0d0d0; display: flex; padding-top: 3px; }
.group { display: flex; flex-direction: column; border-right: 1px solid #c8c8c8; height: 79px; }
.group-body { height: 65px; flex: none; }
.group-foot { display: flex; align-items: center; height: 18px; padding-right: 3px; color: #333; margin-top: 0; }
.group-foot svg { margin-top: 3px; }
.group-foot span { flex: 1; text-align: center; padding-right: 6px; line-height: 18px; }
.group-foot.solo { padding: 0; }
.group-foot.solo span { padding: 0; }
.clipboard { width: 152px; }
.font { width: 247px; }
.paragraph { width: 213px; }
.styles { width: 496px; }
.editing { width: 79px; }

.clip-body { display: flex; }
.paste { width: 48px; padding: 3px 0 0 5px; display: flex; flex-direction: column; align-items: center; }
.paste span { line-height: 14px; }
.dd { margin-top: 6px; }
.clip-list div, .edit-list div { display: flex; align-items: center; height: 21px; line-height: 19px; }
.clip-list, .edit-list { margin-top: -1px; }
.clip-list div { gap: 2px; }
.edit-list { padding-left: 9px; }
.edit-list div { gap: 1px; }
.edit-list .gap { margin-left: 9px; }
.edit-list .near { margin-left: 2px; }

.font-body { padding: 7px 0 0 7px; }
.font-row { display: flex; height: 22px; margin-bottom: 6px; }
.combo { height: 21px; background: #fff; border: 1px solid #c6c6c6; display: flex; align-items: center; justify-content: space-between; padding: 0 4px 0 2px; color: #444; }
.combo.name { width: 87px; }
.combo.size { width: 39px; margin: 0 1px 0 0; border-left: 0; }
.glyph { fill: #555; letter-spacing: 0; }
.heavy { font-weight: 700; font-size: 11px; }
.marker { font-weight: 600; font-size: 9px; }
.fontcolor { font-weight: 600; font-size: 13px; }
.ital { font-style: italic; font-family: "Liberation Serif", serif; font-size: 13px; }
.tiny { font-size: 6px; font-weight: 700; fill: #2a72b5; letter-spacing: 0; }
.effect { font-size: 14px; font-weight: 600; fill: #fff; stroke: #3b79b7; stroke-width: 1; }
.sort-a { font-size: 8.5px; font-weight: 700; fill: #2a72b5; }
.sort-z { font-size: 8.5px; font-weight: 700; fill: #8a3fb0; }
.rep { font-size: 9px; font-weight: 600; fill: #666; letter-spacing: 0; }
.para-body { padding: 5px 0 0 5px; }

.gallery-body { padding: 2px 0 0 8px; }
.gallery { width: 478px; height: 55px; background: #fff; border: solid #d8d8d8; border-width: 1px 0; display: flex; }
.tile { width: 66.200px; height: 53px; padding: 0 5px; display: flex; flex-direction: column; overflow: hidden; }
.tile.selected { outline: 3px solid #c6c6c6; outline-offset: -3px; }
.sample { font-family: Carlito, Lato, sans-serif; font-size: 13.8px; line-height: 38px; height: 33px; overflow: hidden; color: #000; letter-spacing: 0; margin-left: 2px; width: 54px; }
.tile .name { text-align: center; line-height: 18px; color: #555; }
.h1 { font-family: Lato, sans-serif; font-size: 17.5px; color: #1f4e99; font-weight: 300; }
.h2 { font-family: Lato, sans-serif; font-size: 14.5px; color: #1f4e99; font-weight: 300; }
.title { font-family: Lato, sans-serif; font-weight: 300; font-size: 28px; line-height: 20px; padding-top: 7px; }
.title { clip-path: inset(6px 0 0 0); margin-left: 0; letter-spacing: .5px; }
.subtitle { letter-spacing: 1px; color: #666; }
.subtle { font-style: italic; color: #404040; }
.scroller { width: 13px; margin-left: auto; display: grid; grid-template-rows: 18px 17px 18px; border-left: 1px solid #d0d0d0; border-right: 1px solid #d0d0d0; }
.scroller span { display: grid; place-items: center; border-bottom: 1px solid #d0d0d0; }
.scroller .off { background: #e3e3e3; }
.collapse { padding: 71px 0 0 49px; }

.workspace { height: 504px; background: #e6e6e6; padding-left: 244px; overflow: hidden; }
.page { width: 748px; height: 504px; overflow: hidden; background: #fff; border: solid #cfcfcf; border-width: 0 1px; padding-left: 87px; color: #111; letter-spacing: 0; }
.wordart { margin-left: 98px; height: 94px; }
.wordart text { font-family: Roboto, sans-serif; font-weight: 700; font-size: 59px; fill: url(#steel); }
.black-text { font-family: Inter, "Liberation Sans", sans-serif; font-weight: 900; font-size: 14px; color: #000; letter-spacing: .46px; }
.black-text.first { height: 36px; line-height: 36px; }
.code { font-family: "Liberation Mono", monospace; font-size: 11.5px; letter-spacing: .435px; line-height: 26px; height: 24px; color: #222; }
.indent { margin-left: 22px; }
.gap-top { margin-top: 21px; }
.squiggle { text-decoration: underline wavy #e33; text-decoration-thickness: 1px; text-underline-offset: 1px; text-decoration-skip-ink: none; }
.double { text-decoration: underline double #3c78dc; text-decoration-thickness: 1px; text-underline-offset: 2px; text-decoration-skip-ink: none; }
.init { margin-top: 7px; height: 25px; line-height: 27px; display: flex; }
.init .big { font-size: 18.5px; letter-spacing: -.3px; width: 18px; line-height: 25px; }
.init .shade { letter-spacing: .43px; }
.shade { background: #f6f6f7; color: #374151; }
.gitinit { margin-top: 6px; }
.gitinit .shade { color: #4a5260; }
.tracked { margin-top: 5px; height: 20px; line-height: 20px; font-size: 14.2px; }
.tracked .shade { display: inline-block; letter-spacing: .7px; }
.body-line { font-family: Carlito, Lato, sans-serif; font-size: 17.25px; height: 32.4px; line-height: 23px; }
.select-line { margin-top: 9px; height: 34px; line-height: 25px; }
.selection { background: #c6c6c6; display: inline-block; height: 33px; line-height: 27px; width: 121px; vertical-align: top; }
.code-run { font-family: "Liberation Mono", monospace; font-size: 11.5px; letter-spacing: .435px; color: #222; }
.after-dot { margin-left: 4px; }
.small-run { font-size: 13.8px; margin-left: 4px; }
.check { font-size: 18px; letter-spacing: .4px; height: 24px; line-height: 26px; }
.status-code { font-size: 13.5px; letter-spacing: 0; margin-top: 7px; }

.statusbar { height: 20px; background: #f3f3f3; border-top: 1px solid #c6c6c6; display: flex; align-items: center; padding-left: 7px; color: #444; line-height: 17px; letter-spacing: -.45px; }
.statusbar > span { height: 19px; }
.pages { width: 70px; }
.words { width: 87px; }
.views { margin-left: 823px; }
.zoom { margin-left: 2px; }

.inner-taskbar { height: 37px; display: flex; background: linear-gradient(90deg, #213b45 0%, #20333f 45%, #1b2c42 75%, #1b2b4c 100%); color: #fff; position: relative; }
.inner-taskbar > span { display: flex; align-items: center; justify-content: center; }
.start { width: 44px; }
.search { width: 316px; background: #f2f2f2; border-top: 1px solid #c9c9c9; color: #444; font-size: 13.8px; justify-content: flex-start !important; padding-left: 11px; gap: 10px; letter-spacing: -.54px; border-bottom: 1px solid #ddd; }
.search svg { color: #333; }
.inner-taskbar .sys { width: 44px; }
.inner-taskbar .sys + .app { margin-left: 1px; }
.inner-taskbar .app { width: 45px; padding-top: 0; }
.inner-taskbar .open { background: linear-gradient(#76b9ed, #76b9ed) 50% 100% / 37px 2px no-repeat; }
.inner-taskbar .multi { background: linear-gradient(90deg, #76b9ed 29px, #5081ad 29px) 50% 100% / 37px 2px no-repeat; }
.inner-taskbar .current { background: linear-gradient(#76b9ed, #76b9ed) 50% 100% / 44px 2px no-repeat, linear-gradient(90deg, #4a5869 40px, #3a4a60 40px); width: 44px; }
.inner-tray { margin-left: auto; padding-right: 15px; }
.clock { text-align: center; font-size: 10.7px; line-height: 16px; letter-spacing: -.25px; color: #fff; }
.inner-tray .clock { width: 66px; padding-right: 0; margin: 0 6px 0 0; }
.n { font-size: 8.5px; font-weight: 600; fill: #fff; text-anchor: middle; letter-spacing: 0; }
.two { font-size: 10.5px; }

.taskbar { height: 40px; flex: none; display: flex; background: linear-gradient(90deg, #444336, #474747 12%, #474747); color: #fff; padding-right: 4px; }
.taskbar > span { display: flex; align-items: center; justify-content: center; }
.taskbar .sys { width: 48px; }
.taskbar .sys + .app { margin-left: 3px; }
.taskbar .sys + .sys + .sys { width: 48px; }
.taskbar .app { width: 48px; margin-right: 1px; }
.taskbar .open { background: linear-gradient(#76b9ed, #76b9ed) 50% 100% / 40px 2px no-repeat; }
.taskbar .current { background: linear-gradient(#76b9ed, #76b9ed) 50% 100% / 48px 2px no-repeat, #6a6a6a; }
.taskbar .photos { margin-left: 30px; }
.badge-letter { font-size: 10.5px; font-weight: 700; fill: #fff; text-anchor: middle; letter-spacing: 0; }
.ai { font-size: 9px; font-weight: 600; fill: #073042; letter-spacing: -.3px; }
.pc { font-size: 8px; font-weight: 700; fill: #fff; letter-spacing: 0; }
.ps { font-size: 11px; font-weight: 700; fill: #06213c; text-anchor: middle; letter-spacing: 0; }
.rr { font-family: "Liberation Serif", serif; font-size: 17px; fill: #fff; text-anchor: middle; }
.tray { margin-left: auto; padding-right: 19px; }
.tray .clock { width: 66px; font-size: 11.5px; line-height: 18px; margin-right: 9px; }
```
